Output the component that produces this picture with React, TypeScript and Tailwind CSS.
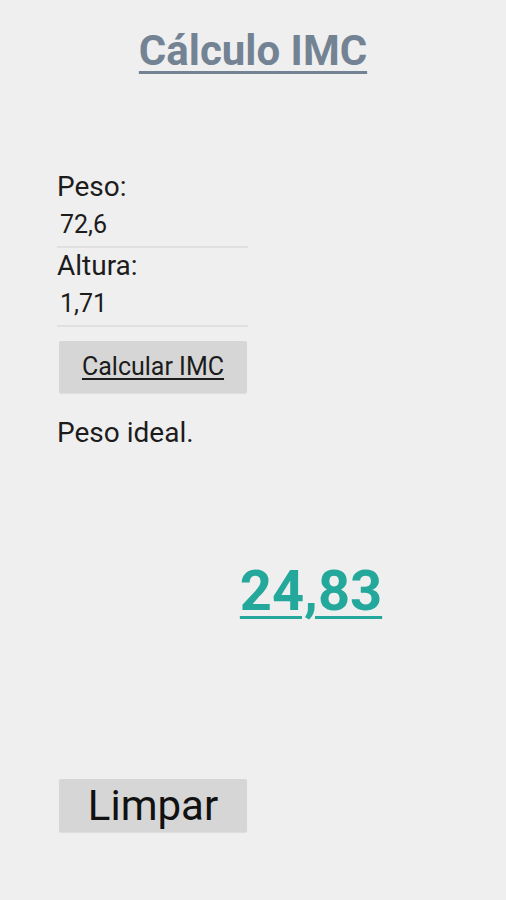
import { useState } from 'react'

const FONT = { fontFamily: 'Roboto, "Noto Sans", sans-serif' }

export default function App() {
  const [peso, setPeso] = useState('72,6')
  const [altura, setAltura] = useState('1,71')
  const [imc, setImc] = useState('24,83')
  const [msg, setMsg] = useState('Peso ideal.')

  const calcular = () => {
    const p = parseFloat(peso.replace(',', '.'))
    const a = parseFloat(altura.replace(',', '.'))
    if (!p || !a) return
    const v = p / (a * a)
    setImc(v.toFixed(2).replace('.', ','))
    setMsg(v < 18.5 ? 'Abaixo do peso.' : v < 25 ? 'Peso ideal.' : 'Acima do peso.')
  }

  const limpar = () => {
    setPeso('')
    setAltura('')
    setImc('')
    setMsg('')
  }

  return (
    <div className="w-[506px] h-[900px] bg-[#efefef] overflow-hidden" style={FONT}>
      <h1 className="pt-[26px] text-center text-[42px] leading-[50px] font-bold text-[#738394] underline decoration-[3px] underline-offset-[6px]">
        Cálculo IMC
      </h1>

      <div className="pl-[57px] w-[248px]">
        <p className="mt-[95px] text-[28px] leading-[32px] text-[#1c1c1c]">Peso:</p>
        <div className="mt-[7px] pb-[6px] border-b-2 border-[#e0e0e0]">
          <input
            value={peso}
            onChange={(e) => setPeso(e.target.value)}
            className="block w-full bg-transparent pl-[3px] text-[25px] leading-[30px] h-[30px] text-[#1c1c1c] outline-none"
          />
        </div>
        <p className="mt-[2px] text-[28px] leading-[32px] text-[#1c1c1c]">Altura:</p>
        <div className="mt-[7px] pb-[6px] border-b-2 border-[#e0e0e0]">
          <input
            value={altura}
            onChange={(e) => setAltura(e.target.value)}
            className="block w-full bg-transparent pl-[3px] text-[25px] leading-[30px] h-[30px] text-[#1c1c1c] outline-none"
          />
        </div>
        <button
          onClick={calcular}
          className="mt-[14px] ml-[2px] w-[188px] h-[52px] bg-[#d6d6d6] text-[25px] leading-[52px] text-[#1c1c1c] underline underline-offset-[3px] rounded-[2px] shadow-[0_1px_1px_rgba(0,0,0,0.08)]"
        >
          Calcular IMC
        </button>
        <p className="mt-[24px] h-[32px] text-[28px] leading-[32px] text-[#1c1c1c]">{msg}</p>
      </div>

      <p className="mt-[110px] h-[64px] pl-[116px] text-center text-[56px] leading-[64px] font-bold text-[#24a89b] underline decoration-[3px] underline-offset-[6px]">
        {imc}
      </p>

      <div className="pl-[59px] mt-[156px]">
        <button
          onClick={limpar}
          className="w-[188px] h-[53px] bg-[#d6d6d6] text-[42px] leading-[53px] text-[#111] rounded-[2px] shadow-[0_1px_1px_rgba(0,0,0,0.08)]"
        >
          Limpar
        </button>
      </div>
    </div>
  )
}
